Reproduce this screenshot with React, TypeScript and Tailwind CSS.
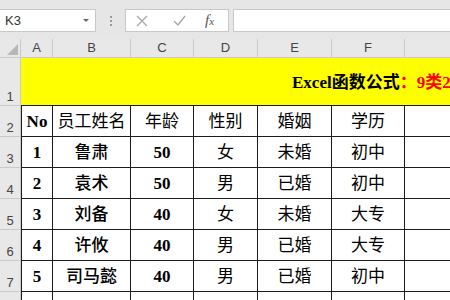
import React from "react";

const cols = [32, 78, 63, 64, 74, 73, 100];
const letters = ["A", "B", "C", "D", "E", "F", ""];

const data: string[][] = [
  ["1", "鲁肃", "50", "女", "未婚", "初中"],
  ["2", "袁术", "50", "男", "已婚", "初中"],
  ["3", "刘备", "40", "女", "未婚", "大专"],
  ["4", "许攸", "40", "男", "已婚", "大专"],
  ["5", "司马懿", "40", "男", "已婚", "初中"],
];

const serif = { fontFamily: '"Liberation Serif", "Noto Sans CJK SC", serif' };

function RowHead({ n }: { n: string }) {
  return (
    <div
      className="w-[21px] shrink-0 h-full bg-[#e8e8e8] border-b border-r border-[#c9c9c9] flex items-end justify-center pb-[1px] text-[13px] text-[#444] leading-none"
      style={{ fontFamily: '"Liberation Sans", sans-serif' }}
    >
      <span className="mb-[1px]">{n}</span>
    </div>
  );
}

function Cell({ w, children, weight, first }: { w: number; children?: React.ReactNode; weight?: "bold" | "medium"; first?: boolean }) {
  const wc = weight === "bold" ? "font-bold" : weight === "medium" ? "font-medium" : "font-normal";
  return (
    <div
      className={`shrink-0 h-full border-b border-r border-[#1c1c1c] bg-white flex items-center justify-center pt-[2px] text-[17px] text-black whitespace-nowrap ${wc} ${first ? "border-l" : ""}`}
      style={{ width: w, ...serif }}
    >
      {children}
    </div>
  );
}

export default function App() {
  return (
    <div className="w-[450px] h-[300px] overflow-hidden bg-white relative">
      {/* top bar */}
      <div className="h-[39px] bg-[#e6e6e6] flex items-start pt-[9px]">
        <div className="w-[96px] h-[23px] bg-white border border-l-0 border-[#c8c8c8] flex items-center justify-between pl-[5px] pr-[6px]">
          <span className="text-[13px] text-[#333]" style={{ fontFamily: '"Liberation Sans", sans-serif' }}>K3</span>
          <span className="w-0 h-0 border-l-[3px] border-r-[3px] border-t-[3px] border-l-transparent border-r-transparent border-t-[#666]" />
        </div>
        <div className="w-[29px] h-[23px] flex flex-col items-center justify-center gap-[2px]">
          <span className="w-[2px] h-[2px] bg-[#9a9a9a]" />
          <span className="w-[2px] h-[2px] bg-[#9a9a9a]" />
          <span className="w-[2px] h-[2px] bg-[#9a9a9a]" />
        </div>
        <div className="w-[104px] h-[23px] bg-white border border-[#c8c8c8] flex items-center">
          <svg width="12" height="12" viewBox="0 0 12 12" className="ml-[10px]">
            <path d="M1 1 L11 11 M11 1 L1 11" stroke="#a8a8a8" strokeWidth="1.3" fill="none" />
          </svg>
          <svg width="13" height="11" viewBox="0 0 13 11" className="ml-[25px]">
            <path d="M1 6 L5 10 L12 1" stroke="#a8a8a8" strokeWidth="1.4" fill="none" />
          </svg>
          <span className="ml-[19px] text-[15px] italic text-[#555] leading-none" style={{ fontFamily: '"Liberation Serif", serif' }}>
            f<span className="text-[11px]">x</span>
          </span>
        </div>
        <div className="ml-[4px] flex-1 h-[23px] bg-white border border-r-0 border-[#c8c8c8]" />
      </div>

      {/* column headers */}
      <div className="flex h-[19px]">
        <div className="w-[21px] shrink-0 h-full bg-[#e8e8e8] border-r border-b border-[#c9c9c9] relative">
          <div className="absolute right-[2px] bottom-[2px] w-0 h-0" style={{ borderBottom: "11px solid #b8b8b8", borderLeft: "11px solid transparent" }} />
        </div>
        {cols.map((w, i) => (
          <div
            key={i}
            className="shrink-0 h-full bg-[#e8e8e8] border-r border-b border-[#c9c9c9] flex items-center justify-center text-[13px] text-[#444]"
            style={{ width: w, fontFamily: '"Liberation Sans", sans-serif' }}
          >
            {letters[i]}
          </div>
        ))}
      </div>

      {/* row 1 */}
      <div className="flex h-[48px]">
        <RowHead n="1" />
        <div className="flex-1 h-full bg-[#ffff00] border-b border-[#1c1c1c] flex items-center pl-[271px] pt-[2px] whitespace-nowrap overflow-hidden text-[17px] font-bold" style={serif}>
          <span className="text-black">Excel函数公式</span>
          <span className="text-[#ff0000]">：9类21个</span>
        </div>
      </div>

      {/* row 2 header */}
      <div className="flex h-[31px]">
        <RowHead n="2" />
        <Cell w={cols[0]} weight="bold" first>No</Cell>
        <Cell w={cols[1]}>员工姓名</Cell>
        <Cell w={cols[2]}>年龄</Cell>
        <Cell w={cols[3]}>性别</Cell>
        <Cell w={cols[4]}>婚姻</Cell>
        <Cell w={cols[5]}>学历</Cell>
        <Cell w={cols[6]} />
      </div>

      {data.map((r, i) => (
        <div key={i} className="flex h-[31px]">
          <RowHead n={String(i + 3)} />
          <Cell w={cols[0]} weight="bold" first>{r[0]}</Cell>
          <Cell w={cols[1]} weight="medium">{r[1]}</Cell>
          <Cell w={cols[2]} weight="bold">{r[2]}</Cell>
          <Cell w={cols[3]}>{r[3]}</Cell>
          <Cell w={cols[4]}>{r[4]}</Cell>
          <Cell w={cols[5]}>{r[5]}</Cell>
          <Cell w={cols[6]} />
        </div>
      ))}

      <div className="flex h-[31px]">
        <RowHead n="" />
        <Cell w={cols[0]} first />
        <Cell w={cols[1]} />
        <Cell w={cols[2]} />
        <Cell w={cols[3]} />
        <Cell w={cols[4]} />
        <Cell w={cols[5]} />
        <Cell w={cols[6]} />
      </div>
    </div>
  );
}
